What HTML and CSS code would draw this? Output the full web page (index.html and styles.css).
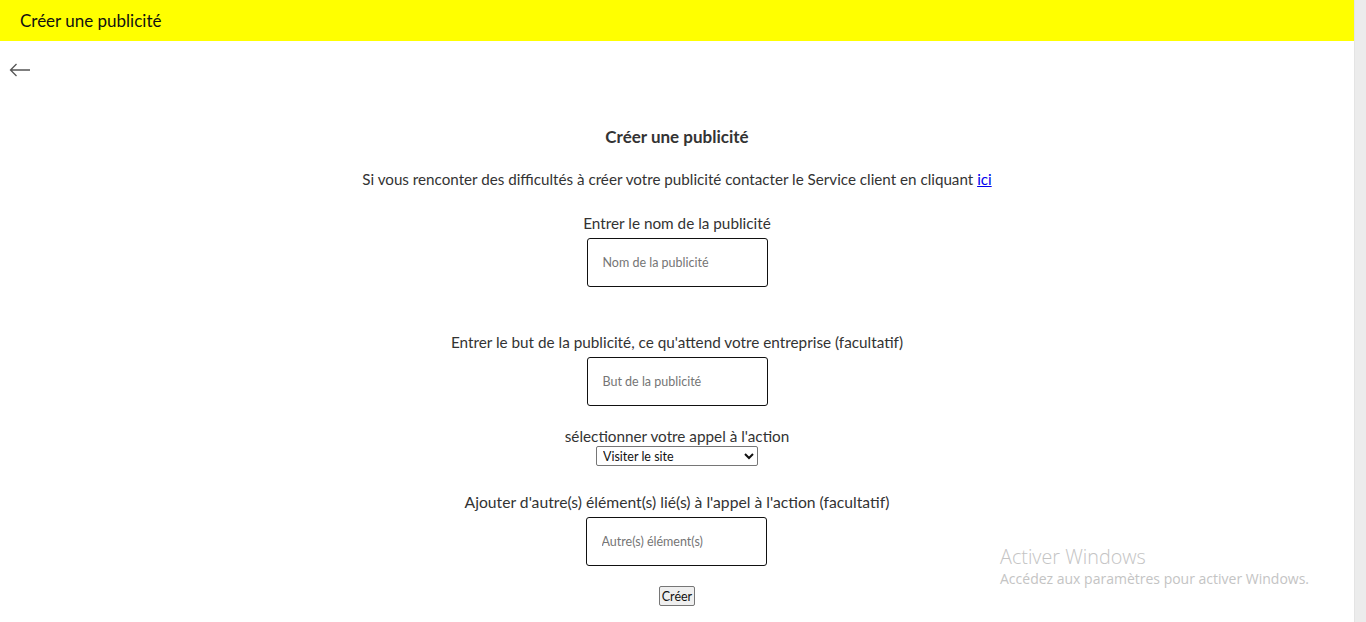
FILE: index.html
```html
<!DOCTYPE html>
<html lang="fr">
<head>
<meta charset="utf-8">
<title>Créer une publicité</title>
<link rel="stylesheet" href="styles.css">
</head>
<body>
<div class="frame">
  <div class="page">
    <header class="topbar">Créer une publicité</header>
    <div class="backrow">
      <svg class="back" width="22" height="14" viewBox="0 0 22 14" aria-hidden="true">
        <path d="M21 7H1.5M7.5 1L1.5 7l6 6" fill="none" stroke="#555" stroke-width="1.3"/>
      </svg>
    </div>
    <main class="form">
      <h1 class="title">Créer une publicité</h1>
      <p class="desc">Si vous renconter des difficultés à créer votre publicité contacter le Service client en cliquant <a href="#">ici</a></p>
      <label class="label l1">Entrer le nom de la publicité</label>
      <input class="field" type="text" placeholder="Nom de la publicité">
      <label class="label l2">Entrer le but de la publicité, ce qu'attend votre entreprise (facultatif)</label>
      <input class="field" type="text" placeholder="But de la publicité">
      <label class="label l3">sélectionner votre appel à l'action</label>
      <select class="select"><option>Visiter le site</option></select>
      <label class="label l4">Ajouter d'autre(s) élément(s) lié(s) à l'appel à l'action (facultatif)</label>
      <input class="field f4" type="text" placeholder="Autre(s) élément(s)">
      <button class="btn" type="button">Créer</button>
    </main>
  </div>
  <div class="scrollbar"></div>
  <div class="watermark">
    <div class="wm1">Activer Windows</div>
    <div class="wm2">Accédez aux paramètres pour activer Windows.</div>
  </div>
</div>
</body>
</html>
```

FILE: styles.css
```css
* { box-sizing: border-box; }
html, body { margin: 0; padding: 0; height: 100%; overflow: hidden; }
body { font-family: Lato, "Open Sans", sans-serif; color: #333; background: #fff; }
.frame { display: flex; height: 622px; position: relative; }
.page { flex: 1; }
.scrollbar { width: 12px; background: #ececec; border-left: 1px solid #e4e4e4; }
.topbar { height: 41px; background: #ffff00; color: #111; font-size: 17px; line-height: 41px; padding-left: 20px; }
.backrow { height: 39px; padding: 22px 0 0 9px; }
.back { display: block; }
.form { display: flex; flex-direction: column; align-items: center; }
.title { margin: 47px 0 0; font-size: 17px; font-weight: 700; line-height: 20px; color: #333; }
.desc { margin: 22px 0 0; font-size: 15.2px; line-height: 20px; }
.desc a { color: #0000ee; }
.label { font-size: 15.3px; line-height: 20px; display: block; }
.l1 { margin-top: 24px; }
.l2 { margin-top: 45px; }
.l3 { margin-top: 20px; }
.l4 { margin-top: 26px; font-size: 15.7px; }
.field { margin-top: 5px; width: 181px; height: 49px; border: 1px solid #111; border-radius: 3px; padding: 0 15px; font-family: Lato, sans-serif; font-size: 12.5px; color: #333; outline: none; }
.field::placeholder { color: #757575; }
.f4 { margin-left: -2px; }
.select { margin-top: 0; width: 162px; height: 20px; font-family: Lato, sans-serif; font-size: 12.5px; color: #111; border: 1px solid #767676; border-radius: 2px; background: #fff; padding: 0 2px; }
.btn { margin-top: 20px; height: 20px; padding: 0 2px; font-family: Lato, sans-serif; font-size: 12.5px; color: #111; background: #efefef; border: 1px solid #767676; border-radius: 2px; }
.watermark { position: absolute; left: 1000px; top: 545px; color: #c4c4c4; font-family: "Open Sans", sans-serif; pointer-events: none; }
.wm1 { font-size: 19.8px; font-weight: 300; line-height: 24px; }
.wm2 { font-size: 14px; line-height: 20px; }
```
